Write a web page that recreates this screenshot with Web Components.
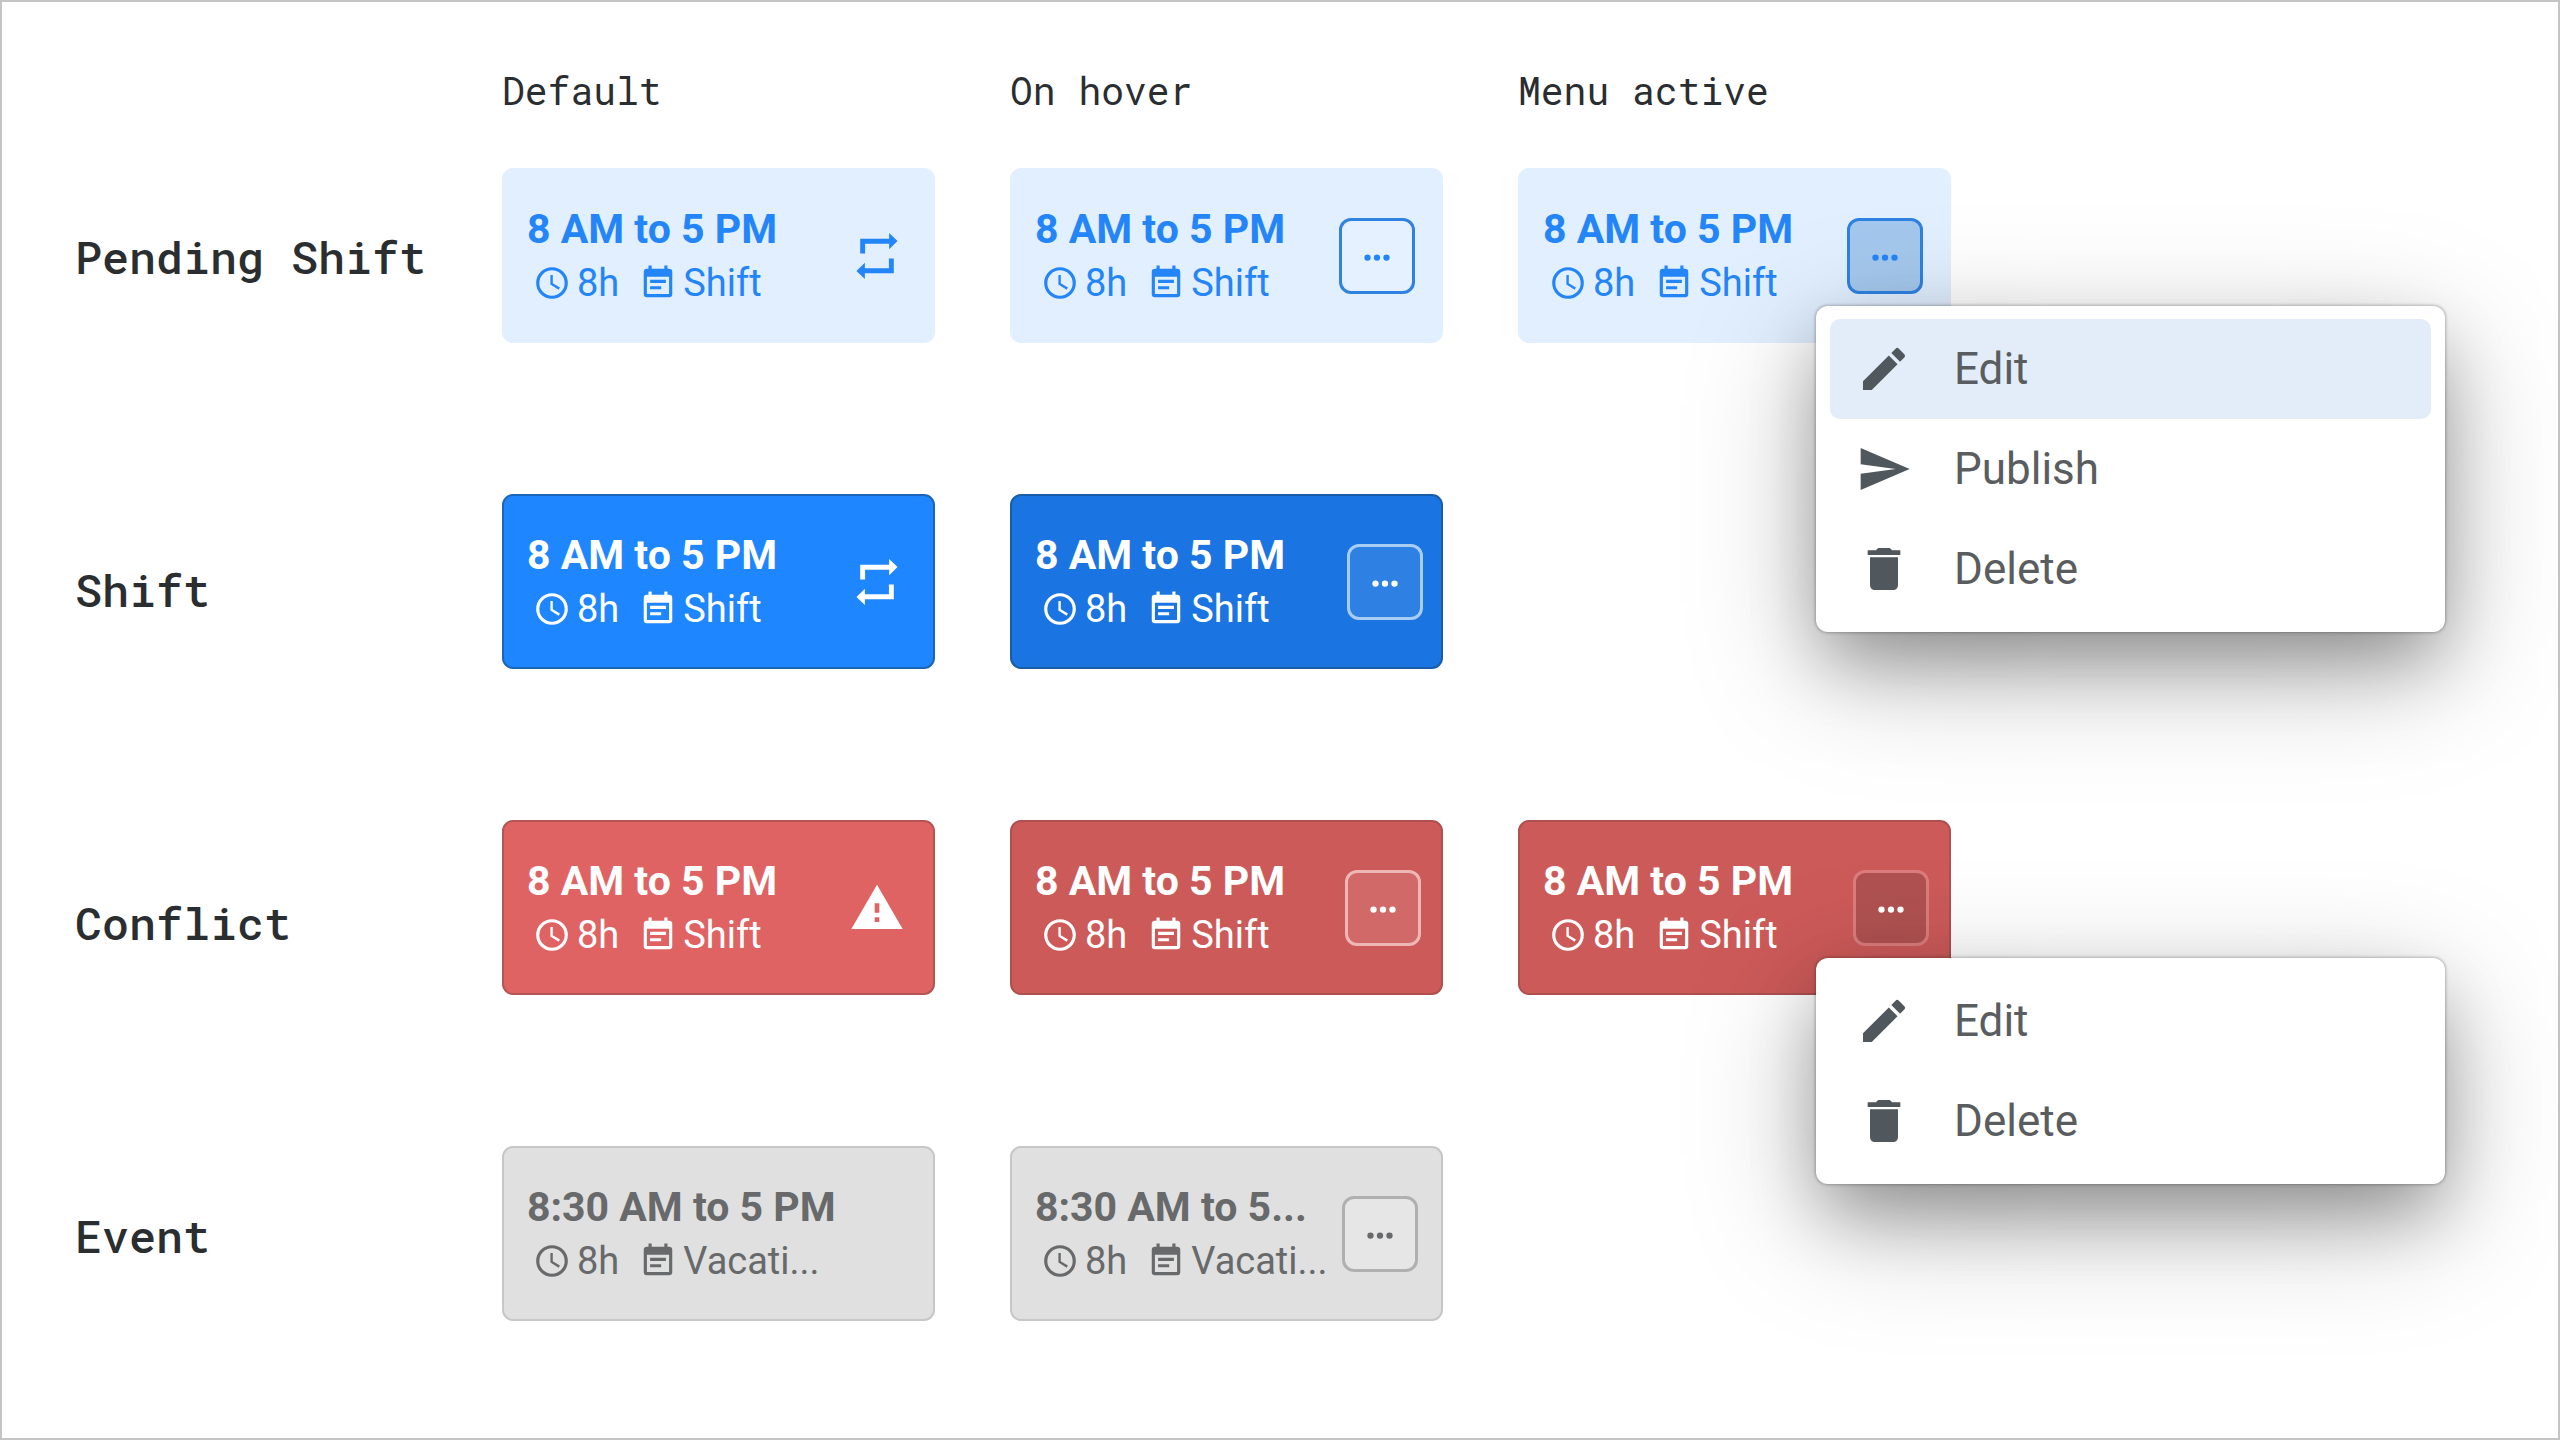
<!DOCTYPE html>
<html lang="en">
<head>
  <meta charset="utf-8">
  <title>Shift card states</title>
  <style>
    body {
      margin: 0;
      background: #fff;
      font-family: Roboto, sans-serif;
    }
  </style>
</head>
<body>
  <state-board>
    <span slot="column">Default</span>
    <span slot="column">On hover</span>
    <span slot="column">Menu active</span>

    <span slot="row">Pending Shift</span>
    <span slot="row">Shift</span>
    <span slot="row">Conflict</span>
    <span slot="row">Event</span>

    <shift-card kind="pending" hours="8h" label="Shift" icon="repeat">8 AM to 5 PM</shift-card>
    <shift-card kind="pending" state="hover" hours="8h" label="Shift">8 AM to 5 PM</shift-card>
    <shift-card kind="pending" state="active" hours="8h" label="Shift">8 AM to 5 PM
      <action-menu slot="menu">
        <menu-action icon="edit" selected>Edit</menu-action>
        <menu-action icon="send">Publish</menu-action>
        <menu-action icon="trash">Delete</menu-action>
      </action-menu>
    </shift-card>

    <shift-card class="first" kind="shift" hours="8h" label="Shift" icon="repeat">8 AM to 5 PM</shift-card>
    <shift-card kind="shift" state="hover" hours="8h" label="Shift">8 AM to 5 PM</shift-card>

    <shift-card class="first" kind="conflict" hours="8h" label="Shift" icon="warning">8 AM to 5 PM</shift-card>
    <shift-card kind="conflict" state="hover" hours="8h" label="Shift">8 AM to 5 PM</shift-card>
    <shift-card kind="conflict" state="active" hours="8h" label="Shift">8 AM to 5 PM
      <action-menu slot="menu">
        <menu-action icon="edit">Edit</menu-action>
        <menu-action icon="trash">Delete</menu-action>
      </action-menu>
    </shift-card>

    <shift-card class="first" kind="event" hours="8h" label="Vacati...">8:30 AM to 5 PM</shift-card>
    <shift-card kind="event" state="hover" hours="8h" label="Vacati...">8:30 AM to 5...</shift-card>
  </state-board>

  <script>
    const ICONS = {
      clock: "M12 2a10 10 0 1 0 0 20 10 10 0 0 0 0-20zm0 18a8 8 0 1 1 0-16 8 8 0 0 1 0 16zM12.500 7H11v6l5.200 3.200.800-1.300-4.500-2.700z",
      note: "M17 10H7v2h10zm2-7h-1V1h-2v2H8V1H6v2H5a2 2 0 0 0-2 2v14a2 2 0 0 0 2 2h14a2 2 0 0 0 2-2V5a2 2 0 0 0-2-2zm0 16H5V8h14zm-5-5H7v2h7z",
      repeat: "M4.800 4.600h12.400V2.100l3.600 3.500-3.600 3.500V6.700H6.900v4.200H4.800zM19.200 19.400H6.800v2.500l-3.600-3.500 3.600-3.500v2.400h10.300v-4.200h2.100z",
      warning: "M1 21h22L12 2zm12-3h-2v-2h2zm0-4h-2v-4h2z",
      edit: "M3 17.250V21h3.750L17.810 9.940l-3.750-3.750zM20.710 7.040a1 1 0 0 0 0-1.410l-2.340-2.340a1 1 0 0 0-1.410 0l-1.830 1.830 3.750 3.750z",
      send: "M2 21l21-9L2 3v7l15 2-15 2z",
      trash: "M6 19a2 2 0 0 0 2 2h8a2 2 0 0 0 2-2V7H6zM19 4h-3.500l-1-1h-5l-1 1H5v2h14z",
      dots: "M6 11a2 2 0 1 0 0 4 2 2 0 0 0 0-4zm6 0a2 2 0 1 0 0 4 2 2 0 0 0 0-4zm6 0a2 2 0 1 0 0 4 2 2 0 0 0 0-4z"
    };

    class UiIcon extends HTMLElement {
      constructor() {
        super();
        this.attachShadow({ mode: "open" });
      }

      static get styles() {
        return /* css */`
          :host {
            display: block;
            flex: none;
            width: var(--icon-size, 38px);
            height: var(--icon-size, 38px);
          }

          svg {
            display: block;
            width: 100%;
            height: 100%;
            fill: currentColor;
          }
        `;
      }

      connectedCallback() {
        this.shadowRoot.innerHTML = /* html */`
        <style>${UiIcon.styles}</style>
        <svg viewBox="0 0 24 24" aria-hidden="true"><path d="${ICONS[this.getAttribute("name")]}"/></svg>`;
      }
    }

    class MenuAction extends HTMLElement {
      constructor() {
        super();
        this.attachShadow({ mode: "open" });
      }

      static get styles() {
        return /* css */`
          :host {
            display: block;
          }

          button {
            display: flex;
            align-items: center;
            gap: 42px;
            width: 100%;
            height: 100px;
            padding: 0 26px;
            border: 0;
            border-radius: 10px;
            background: none;
            color: #5a5d60;
            font: 44px/52px Roboto, sans-serif;
            text-align: left;
          }

          :host([selected]) button {
            background: #e3edf9;
          }

          ui-icon {
            --icon-size: 56px;
            color: #50575d;
          }
        `;
      }

      connectedCallback() {
        this.shadowRoot.innerHTML = /* html */`
        <style>${MenuAction.styles}</style>
        <button type="button" role="menuitem">
          <ui-icon name="${this.getAttribute("icon")}"></ui-icon>
          <slot></slot>
        </button>`;
      }
    }

    class ActionMenu extends HTMLElement {
      constructor() {
        super();
        this.attachShadow({ mode: "open" });
      }

      static get styles() {
        return /* css */`
          :host {
            display: block;
            box-sizing: border-box;
            width: 629px;
            padding: 13px 14px;
            border-radius: 12px;
            background: #fff;
            box-shadow:
              0 0 3px 1px rgba(0, 0, 0, .25),
              0 34px 70px -8px rgba(0, 0, 0, .3),
              0 36px 130px rgba(0, 0, 0, .26);
          }
        `;
      }

      connectedCallback() {
        this.setAttribute("role", "menu");
        this.shadowRoot.innerHTML = /* html */`
        <style>${ActionMenu.styles}</style>
        <slot></slot>`;
      }
    }

    class ShiftCard extends HTMLElement {
      constructor() {
        super();
        this.attachShadow({ mode: "open" });
      }

      static get styles() {
        return /* css */`
          :host {
            --inset: 26px;
            display: flex;
            align-items: center;
            justify-content: space-between;
            position: relative;
            box-sizing: border-box;
            height: 175px;
            padding: 0 var(--inset) 0 23px;
            border: 2px solid var(--edge);
            border-radius: 11px;
            background: var(--fill);
            color: var(--ink);
            white-space: nowrap;
          }

          :host([kind="pending"]) {
            --fill: #e1efff;
            --edge: #e1efff;
            --ink: #2385f8;
            --button-edge: #2f82e2;
            --button-fill: #e5f1ff;
          }

          :host([kind="pending"][state="active"]) {
            --button-fill: #a4c8ed;
          }

          :host([kind="shift"]) {
            --inset: 18px;
            --fill: #1e86ff;
            --edge: #1a65b8;
            --ink: #fff;
          }

          :host([kind="shift"][state]) {
            --fill: #1a74e1;
            --edge: #195da9;
            --button-edge: #a8cdf5;
            --button-fill: #2f80e3;
          }

          :host([kind="conflict"]) {
            --inset: 20px;
            --fill: #df6363;
            --edge: #b55454;
            --ink: #fff;
          }

          :host([kind="conflict"][state]) {
            --fill: #cc5a59;
            --edge: #ae5050;
            --button-edge: #efb6b6;
            --button-fill: #d16969;
          }

          :host([kind="conflict"][state="active"]) {
            --button-edge: #dc7c7c;
            --button-fill: #b05151;
          }

          :host([kind="event"]) {
            --inset: 23px;
            --fill: #e0e0e0;
            --edge: #c6c6c6;
            --ink: #67696b;
            --button-edge: #b0b0b0;
            --button-fill: #e6e6e6;
          }

          .title {
            font-size: 41px;
            font-weight: 700;
            line-height: 54px;
          }

          .meta {
            display: flex;
            align-items: center;
            gap: 6px;
            padding-left: 6px;
            font-size: 38px;
            line-height: 54px;
          }

          .hours {
            margin-right: 14px;
          }

          .status {
            --icon-size: 56px;
            margin-right: calc(28px - var(--inset));
          }

          button {
            display: grid;
            place-items: center;
            box-sizing: border-box;
            width: 76px;
            height: 76px;
            padding: 0;
            border: 3px solid var(--button-edge);
            border-radius: 12px;
            background: var(--button-fill);
            color: var(--ink);
          }

          button ui-icon {
            --icon-size: 38px;
          }

          slot[name="menu"] {
            display: block;
            position: absolute;
            z-index: 1;
            top: 136px;
            left: 296px;
          }
        `;
      }

      get action() {
        if (this.hasAttribute("state")) {
          return /* html */`<button type="button" aria-label="More actions"><ui-icon name="dots"></ui-icon></button>`;
        }
        if (this.hasAttribute("icon")) {
          return /* html */`<ui-icon class="status" name="${this.getAttribute("icon")}"></ui-icon>`;
        }
        return "";
      }

      connectedCallback() {
        this.shadowRoot.innerHTML = /* html */`
        <style>${ShiftCard.styles}</style>
        <div>
          <div class="title"><slot></slot></div>
          <div class="meta">
            <ui-icon name="clock"></ui-icon>
            <span class="hours">${this.getAttribute("hours")}</span>
            <ui-icon name="note"></ui-icon>
            <span>${this.getAttribute("label")}</span>
          </div>
        </div>
        ${this.action}
        <slot name="menu"></slot>`;
      }
    }

    class StateBoard extends HTMLElement {
      constructor() {
        super();
        this.attachShadow({ mode: "open" });
      }

      static get styles() {
        return /* css */`
          :host {
            display: grid;
            grid-template-columns: 427px 1fr;
            box-sizing: border-box;
            min-height: 100vh;
            padding: 58px 72px 0 73px;
            border: 2px solid #c4c4c4;
            color: #2b2e30;
            font-family: Roboto, sans-serif;
          }

          .rows,
          .columns {
            font-family: "Roboto Mono", "DejaVu Sans Mono", monospace;
          }

          .rows {
            display: grid;
            grid-template-rows: 333px 333px 313px auto;
            align-content: start;
            padding-top: 169px;
            font-size: 45px;
            font-weight: 500;
            line-height: 56px;
          }

          .columns,
          .cards {
            display: grid;
            grid-template-columns: repeat(auto-fill, 433px);
            column-gap: 75px;
          }

          .columns {
            padding-bottom: 48px;
            font-size: 38px;
            line-height: 60px;
          }

          .cards {
            row-gap: 151px;
          }

          ::slotted(.first) {
            grid-column-start: 1;
          }
        `;
      }

      connectedCallback() {
        this.shadowRoot.innerHTML = /* html */`
        <style>${StateBoard.styles}</style>
        <div class="rows"><slot name="row"></slot></div>
        <div>
          <div class="columns"><slot name="column"></slot></div>
          <div class="cards"><slot></slot></div>
        </div>`;
      }
    }

    customElements.define("ui-icon", UiIcon);
    customElements.define("menu-action", MenuAction);
    customElements.define("action-menu", ActionMenu);
    customElements.define("shift-card", ShiftCard);
    customElements.define("state-board", StateBoard);
  </script>
</body>
</html>
